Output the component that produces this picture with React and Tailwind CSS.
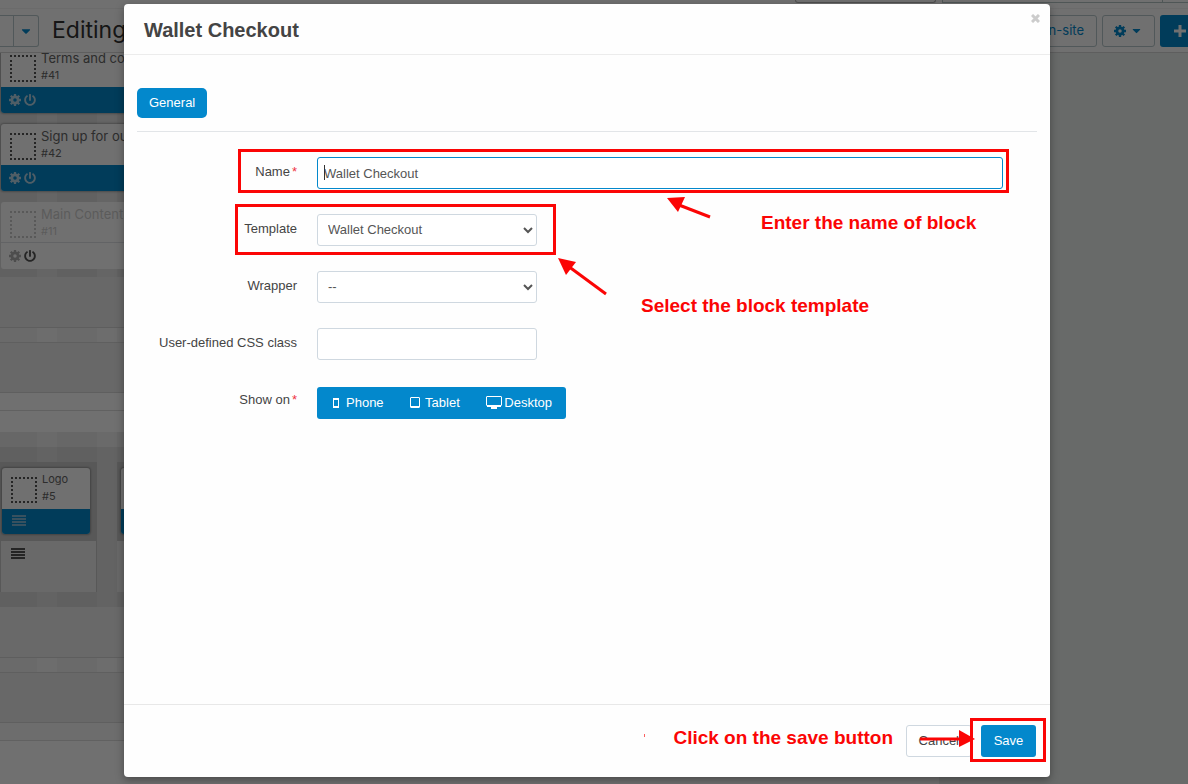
import { useState } from "react";
import { FaCaretDown, FaPowerOff } from "react-icons/fa";

function GearIcon({ className }) {
    return (
        <svg viewBox="0 0 24 24" className={`w-3 h-3 ${className}`} fill="none" stroke="currentColor">
            <circle cx="12" cy="12" r="6.2" strokeWidth="5.4" />
            <path d="M12 0v5M12 19v5M0 12h5M19 12h5M3.5 3.5l3.6 3.6M16.9 16.9l3.6 3.6M3.5 20.5l3.6-3.6M16.9 7.1l3.6-3.6" strokeWidth="4.6" />
        </svg>
    );
}

function JustifyIcon({ className }) {
    return (
        <svg viewBox="0 0 14 11" className={`w-[14px] h-[11px] ${className}`} fill="currentColor">
            <path d="M0 0h14v2H0zM0 3h14v2H0zM0 6h14v2H0zM0 9h14v2H0z" />
        </svg>
    );
}

function BlockCard({ title, id, disabled }) {
    return (
        <div className={`h-[67px] rounded-[3px] overflow-hidden bg-white ${disabled ? '' : 'shadow-[0_0_2px_1px_rgba(0,0,0,0.25)]'}`}>
            <div className={`h-[41px] flex gap-[5px] pl-[9px] whitespace-nowrap ${disabled ? 'opacity-30 border-b border-gray-400' : ''}`}>
                <div className="mt-[9px] w-[26px] h-[27px] shrink-0 border-2 border-dotted border-[#555]" />
                <div>
                    <div className="text-[13px] leading-[25px] text-[#666]">{title}</div>
                    <div className="text-[11px] leading-[9px] text-[#666]">{id}</div>
                </div>
            </div>
            <div className={`h-[26px] flex items-center gap-[3px] pl-2 text-[12px] ${disabled ? '' : 'bg-[#0388cc]'}`}>
                <GearIcon className={disabled ? 'text-[#b0b0b0]' : 'text-[#b5d5e8]'} />
                <FaPowerOff className={disabled ? 'text-[#555]' : 'text-[#b5d5e8]'} />
            </div>
        </div>
    );
}

const stripes = "bg-[repeating-linear-gradient(90deg,rgba(0,0,0,0.03)_0px,rgba(0,0,0,0.03)_40px,transparent_40px,transparent_60px)] bg-[position:-3px_0px]";

function PageHeader() {
    return (
        <header className="bg-white border-b border-[#d5d5d5]">
            <div className="h-[9px] flex justify-end gap-[6px] border-b border-[#f4f4f4]">
                <div className="w-[141px] h-[3px] rounded-b-[3px] border border-t-0 border-[#b5b5b5]" />
                <div className="w-[246px] h-[3px] flex justify-end border-b border-l border-[#b5c4c4]">
                    <div className="w-[26px] border-l border-[#b5c4c4]" />
                </div>
            </div>
            <div className="h-[43px] flex items-center">
                <div className="flex h-8 w-[39px] border border-l-0 border-[#b8c8cc] rounded-r-[3px]">
                    <div className="w-[14px] border-r border-[#b8c8cc]" />
                    <button aria-label="Layouts" className="flex-1 flex items-center justify-center text-[#0388cc] text-[14px]">
                        <FaCaretDown />
                    </button>
                </div>
                <h1 className="ml-[13px] text-[23px] text-[#333] whitespace-nowrap">Editing</h1>
                <div className="ml-auto -mr-3 flex text-[13px] text-[#0388cc]">
                    <button className="h-8 px-3 border border-[#b8c8cc] rounded-[3px]">On-site</button>
                    <button aria-label="Settings" className="ml-[5px] h-8 w-[53px] flex items-center justify-center gap-1 border border-[#b8c8cc] rounded-[3px]">
                        <GearIcon />
                        <FaCaretDown />
                    </button>
                    <button aria-label="Add block" className="ml-[5px] h-8 w-10 flex items-center justify-center bg-[#0388cc] text-white rounded-[3px]">
                        <svg width="12" height="12" viewBox="0 0 12 12" stroke="currentColor" strokeWidth="3">
                            <path d="M6 0v12M0 6h12" />
                        </svg>
                    </button>
                </div>
            </div>
        </header>
    );
}

function Gap() {
    return <div className={`h-[14px] bg-[#f9f9f9] ${stripes}`} />;
}

function LogoColumn({ className }) {
    return (
        <div className={className}>
            <div className="h-[79px] pt-[6px] px-[inherit] bg-[#c9c9c9]">
                <div className="w-[88px] h-[66px] rounded-[3px] overflow-hidden bg-white shadow-[0_0_2px_1px_rgba(0,0,0,0.25)]">
                    <div className="h-[41px] flex gap-[5px] pl-[9px]">
                        <div className="mt-[9px] w-[26px] h-[26px] shrink-0 border-2 border-dotted border-[#555]" />
                        <div className="text-[11px] leading-[17px] pt-[3px] text-[#666]">
                            <div>Logo</div>
                            <div>#5</div>
                        </div>
                    </div>
                    <div className="h-[25px] pt-[6px] pl-[10px] bg-[#0388cc]">
                        <JustifyIcon className="text-[#7fb8d8]" />
                    </div>
                </div>
            </div>
            <div className="h-[51px] mr-px pt-[7px] pl-[10px] bg-[#f0f0f0]">
                <JustifyIcon className="text-[#555]" />
            </div>
        </div>
    );
}

function LayoutPage() {
    return (
        <div className="font-['Inter',sans-serif]">
            <PageHeader />
            <div className="flex">
                <main className="flex-1 min-w-0 bg-white">
                    <div className={`h-[224px] overflow-hidden bg-[#e5e5e5] ${stripes}`}>
                        <div className="-mt-[7px] pl-[1px] flex flex-col gap-[11px]">
                            <BlockCard title="Terms and co" id="#41" />
                            <BlockCard title="Sign up for ou" id="#42" />
                            <BlockCard title="Main Content" id="#11" disabled />
                        </div>
                    </div>
                    <div className="h-[51px] bg-[#ececec] border-b border-[#d5d5d5]" />
                    <Gap />
                    <div className="h-[51px] bg-[#ececec] border-y border-[#d8d8d8]" />
                    <div className="h-[18px] border-b border-[#dcdcdc]" />
                    <div className="h-[21px]" />
                    <div className={`h-[15px] bg-[#f2f2f2] ${stripes}`} />
                    <div className={`h-[160px] pt-[15px] bg-[#e1e1e1] ${stripes}`}>
                        <div className="flex gap-5">
                            <LogoColumn className="w-[97px] pl-[1px] bg-[#c9c9c9]" />
                            <div className="w-[400px] h-[130px] bg-[#f0f0f0]">
                                <div className="h-[79px] pt-[6px] pl-1 bg-[#c9c9c9]">
                                    <div className="w-[88px] h-[66px] rounded-[3px] overflow-hidden bg-white shadow-[0_0_2px_1px_rgba(0,0,0,0.25)]">
                                        <div className="mt-[41px] h-[25px] bg-[#0388cc]" />
                                    </div>
                                </div>
                            </div>
                        </div>
                    </div>
                    <div className="h-[51px] bg-[#efefef] border-b border-[#d5d5d5]" />
                    <Gap />
                    <div className="h-[51px] bg-[#ececec] border-y border-[#d8d8d8]" />
                    <div className="h-[18px] bg-[#f9f9f9] border-b border-[#dcdcdc]" />
                    <div className="h-[43px]" />
                </main>
                <aside className="w-[249px] bg-[#edf1ef]" />
            </div>
        </div>
    );
}

function Arrow({ className, width, height, line, head }) {
    return (
        <svg className={`absolute pointer-events-none ${className}`} width={width} height={height} viewBox={`0 0 ${width} ${height}`}>
            <path d={line} stroke="#fb0505" strokeWidth="3" fill="none" />
            <path d={head} fill="#fb0505" />
        </svg>
    );
}

function Field({ label, htmlFor, required, children }) {
    return (
        <div className="relative flex gap-5 pr-[34px]">
            <label htmlFor={htmlFor} className="w-[160px] shrink-0 text-right leading-[30px]">
                {label}
                {required && <span className="text-[#ee3344] ml-[2px]">*</span>}
            </label>
            {children}
        </div>
    );
}

function SelectBox({ id, options }) {
    return (
        <div className="relative w-[220px]">
            <select id={id} className="appearance-none w-full h-8 pl-[10px] pr-6 border border-[#cfd8e0] rounded-[3px] bg-white text-[#555]">
                {options.map((option) => (
                    <option key={option}>{option}</option>
                ))}
            </select>
            <svg className="absolute right-[4px] top-[13px] pointer-events-none" width="10" height="7" viewBox="0 0 10 7">
                <path d="M1 1l4 4 4-4" stroke="#555" strokeWidth="2" fill="none" />
            </svg>
        </div>
    );
}

function BlockModal() {
    const [name, setName] = useState('Wallet Checkout');
    const [cssClass, setCssClass] = useState('');

    return (
        <div role="dialog" aria-labelledby="modal-title" className="relative flex-1 flex flex-col bg-[#fefefe] rounded-[4px] shadow-[0_3px_9px_rgba(0,0,0,0.35)] text-[13px] text-[#444]">
            <div className="h-[51px] flex justify-between border-b border-[#ececec] pl-5 pr-[10px]">
                <h2 id="modal-title" className="text-[20px] leading-[52px] font-bold">Wallet Checkout</h2>
                <button aria-label="Close" className="self-start pt-[10px] text-[#ccc]">
                    <svg width="9" height="9" viewBox="0 0 9 9" stroke="currentColor" strokeWidth="3">
                        <path d="M1 1l7 7M8 1l-7 7" />
                    </svg>
                </button>
            </div>

            <div className="relative flex-1 px-[13px] pt-[33px]">
                <div className="pb-[13px] border-b border-[#e2e5e8]">
                    <button className="block h-[30px] px-3 rounded-[5px] bg-[#0388cc] text-white">General</button>
                </div>

                <form className="pt-[25px] flex flex-col gap-[25px]">
                    <Field label="Name" htmlFor="name" required>
                        <div className="relative flex-1">
                            <input
                                id="name"
                                type="text"
                                value={name}
                                onChange={(e) => setName(e.target.value)}
                                className="block w-full h-8 px-[6px] border border-[#0388cc] rounded-[3px] bg-white text-[#555] outline-none"
                            />
                            <span className="absolute left-[7px] top-2 w-px h-[15px] bg-[#333]" />
                        </div>
                        <div className="absolute -top-2 -bottom-1 left-[101px] right-7 border-3 border-[#fb0505] pointer-events-none" />
                    </Field>
                    <Field label="Template" htmlFor="template">
                        <SelectBox id="template" options={['Wallet Checkout']} />
                        <div className="absolute -top-2.5 -bottom-[9px] left-[98px] w-[321px] border-3 border-[#fb0505] pointer-events-none" />
                    </Field>
                    <Field label="Wrapper" htmlFor="wrapper">
                        <SelectBox id="wrapper" options={['--']} />
                    </Field>
                    <Field label="User-defined CSS class" htmlFor="css-class">
                        <input
                            id="css-class"
                            type="text"
                            value={cssClass}
                            onChange={(e) => setCssClass(e.target.value)}
                            className="w-[220px] h-8 px-[6px] border border-[#cfd8e0] rounded-[3px] bg-white outline-none"
                        />
                    </Field>
                    <Field label="Show on" htmlFor="show-phone" required>
                        <div className="mt-[2px] h-8 w-[249px] flex items-center justify-between pl-[15px] pr-[14px] rounded-[3px] bg-[#0388cc] text-white">
                            <button id="show-phone" type="button" className="flex items-center gap-[6px]">
                                <svg width="8" height="12" viewBox="0 0 8 12" fill="none" stroke="currentColor">
                                    <path d="M1.5 1v10M6.5 1v10" />
                                    <path d="M1 2h6M1 10h6" strokeWidth="2" />
                                </svg>
                                Phone
                            </button>
                            <button type="button" className="flex items-center gap-[5px]">
                                <svg width="10" height="12" viewBox="0 0 10 12" fill="none" stroke="currentColor">
                                    <rect x="0.5" y="0.5" width="9" height="10" rx="0.5" />
                                    <path d="M1 10h8" strokeWidth="2" />
                                </svg>
                                Tablet
                            </button>
                            <button type="button" className="flex items-center gap-[2px]">
                                <svg width="16" height="14" viewBox="0 0 16 14" fill="none" stroke="currentColor">
                                    <rect x="0.5" y="0.5" width="15" height="9" rx="0.5" />
                                    <path d="M1 10h14" strokeWidth="2" />
                                    <path d="M5 12h6" strokeWidth="2" />
                                </svg>
                                Desktop
                            </button>
                        </div>
                    </Field>
                </form>

                {/* hints over the form */}
                <Arrow className="left-[543px] top-[142px]" width={46} height={22} line="M12 8L43 20" head="M0 1L18 0L11 15z" />
                <p className="absolute left-[637px] top-[156px] text-[19px] leading-6 font-bold text-[#fb0505]">Enter the name of block</p>
                <Arrow className="left-[434px] top-[203px]" width={50} height={38} line="M10 8L48 36" head="M0 0L18 4L8 17z" />
                <p className="absolute left-[517px] top-[239px] text-[19px] leading-6 font-bold text-[#fb0505]">Select the block template</p>
            </div>

            <div className="relative flex justify-end gap-[9px] py-5 pr-[14px] border-t border-[#e8e8e8]">
                <button className="h-8 px-3 border border-[#cfd8e0] rounded-[3px] bg-white">Cancel</button>
                <button className="h-8 w-[55px] rounded-[3px] bg-[#0388cc] text-white">Save</button>
                <div className="absolute right-1 top-[13px] w-[76px] h-[44px] border-3 border-[#fb0505] pointer-events-none" />
                <Arrow className="right-[75px] top-[25px]" width={55} height={18} line="M0 9H42" head="M39 0L55 9L39 17z" />
                <p className="absolute right-[157px] top-[21px] text-[19px] leading-6 font-bold text-[#fb0505]">Click on the save button</p>
                <span className="absolute right-[405px] top-[29px] w-px h-[3px] bg-[#fb6060]" />
            </div>
        </div>
    );
}

function App() {
    return (
        <div className="relative min-h-screen overflow-hidden bg-white">
            <LayoutPage />
            <div className="absolute inset-0 flex pt-1 pb-[7px] pl-[124px] pr-[138px] bg-black/56 font-['Liberation_Sans',Arial,sans-serif]">
                <BlockModal />
            </div>
        </div>
    );
}

export default App;
